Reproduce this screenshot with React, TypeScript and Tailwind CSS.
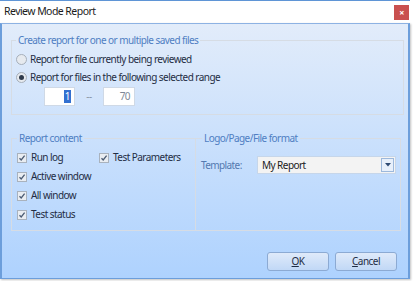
import React from "react";

const font = { fontFamily: "'Noto Sans', 'Open Sans', sans-serif" };

function Check({ label }: { label: string }) {
  return (
    <label className="flex h-[19px] items-center gap-[4px] whitespace-nowrap text-[#1f2d44]">
      <span className="flex h-[10px] w-[10px] shrink-0 items-center justify-center border border-[#a9b2bd] bg-[#e9edf2]">
        <svg width="8" height="8" viewBox="0 0 8 8">
          <path d="M1.5 4.2 L3.2 6 L6.6 1.6" fill="none" stroke="#4b5b73" strokeWidth="1.3" />
        </svg>
      </span>
      {label}
    </label>
  );
}

function Radio({ label, checked }: { label: string; checked?: boolean }) {
  return (
    <label className="flex h-[18px] items-center gap-[3px] whitespace-nowrap text-[#1f2d44]">
      <span className="flex h-[11px] w-[11px] shrink-0 items-center justify-center rounded-full border border-[#a6afba] bg-[#e6eaef]">
        {checked && <span className="h-[5px] w-[5px] rounded-full bg-[#2e3a4c]" />}
      </span>
      {label}
    </label>
  );
}

export default function App() {
  return (
    <div className="h-[281px] w-[413px] bg-white text-[10px] tracking-[-0.55px]" style={font}>
      <div className="h-[1px] w-[410px] bg-[#5f95d6]" />
      <div className="flex h-[22px] w-[410px] items-center justify-between pl-[4px] pr-[1px]">
        <span className="text-[10.5px] tracking-[-0.55px] text-[#1b1b1b]">Review Mode Report</span>
        <span className="flex h-[15px] w-[15px] items-center justify-center bg-[#c9504f] text-[9px] font-bold leading-none text-white">
          ×
        </span>
      </div>
      <div className="h-[256px] w-[410px] border-x-2 border-b border-t border-x-[#6c9edb] border-b-[#6c9edb] border-t-[#8db2e3] bg-gradient-to-b from-[#e2ecfa] to-[#aed2fe] pl-[9px] pr-[4px] pt-[9px] shadow-[1px_1px_2px_rgba(0,0,0,0.25)]">
        <fieldset className="h-[82px] border border-[#d6dce4] px-[4px]">
          <legend className="px-[2px] leading-[14px] text-[#4f7ec2]">
            Create report for one or multiple saved files
          </legend>
          <div className="mt-[3px] flex flex-col">
            <Radio label="Report for file currently being reviewed" />
            <Radio label="Report for files in the following selected range" checked />
          </div>
          <div className="mt-[1px] flex items-center pl-[28px]">
            <div className="flex h-[19px] w-[31px] items-center justify-end border border-[#cfd9e6] bg-white pr-[3px]">
              <span className="bg-[#3370d0] px-[1px] leading-[13px] text-white">1</span>
            </div>
            <span className="w-[28px] text-center text-[#8a96a6]">--</span>
            <div className="flex h-[19px] w-[32px] items-center justify-end border border-[#cfd9e6] bg-white pr-[4px] text-[#7d8796]">
              70
            </div>
          </div>
        </fieldset>
        <div className="mt-[16px] flex h-[100px]">
          <fieldset className="w-[185px] border border-[#d6dce4] px-[5px]">
            <legend className="px-[2px] leading-[14px] text-[#4f7ec2]">Report content</legend>
            <div className="mt-[3px] grid grid-cols-[82px_1fr]">
              <div className="flex flex-col">
                <Check label="Run log" />
                <Check label="Active window" />
                <Check label="All window" />
                <Check label="Test status" />
              </div>
              <div>
                <Check label="Test Parameters" />
              </div>
            </div>
          </fieldset>
          <fieldset className="w-[205px] border border-l-0 border-[#d6dce4] pl-[5px]">
            <legend className="ml-[1px] px-[2px] leading-[14px] text-[#4f7ec2]">
              Logo/Page/File format
            </legend>
            <div className="mt-[11px] flex items-center">
              <span className="w-[56px] tracking-[-0.6px] text-[#5379b0]">Template:</span>
              <div className="flex h-[18px] w-[139px] items-center justify-between border border-[#c6d6ea] bg-[#f3f3f3] pl-[4px] pr-[1px]">
                <span className="text-[#1b1b1b]">My Report</span>
                <span className="flex h-[14px] w-[13px] items-center justify-center border border-[#9cb8dc] bg-[#e8f0fb]">
                  <svg width="6" height="4" viewBox="0 0 6 4">
                    <path d="M0 0 H6 L3 3.5 Z" fill="#2f4a72" />
                  </svg>
                </span>
              </div>
            </div>
          </fieldset>
        </div>
        <div className="mt-[21px] flex justify-end gap-[6px] pr-[7px]">
          <button className="h-[19px] w-[62px] rounded-[3px] border border-[#8caad3] bg-gradient-to-b from-[#dfeafa] to-[#c1d8f6] text-[#1f2d44]">
            <span className="underline">O</span>K
          </button>
          <button className="h-[19px] w-[62px] rounded-[3px] border border-[#8caad3] bg-gradient-to-b from-[#dfeafa] to-[#c1d8f6] text-[#1f2d44]">
            <span className="underline">C</span>ancel
          </button>
        </div>
      </div>
    </div>
  );
}
